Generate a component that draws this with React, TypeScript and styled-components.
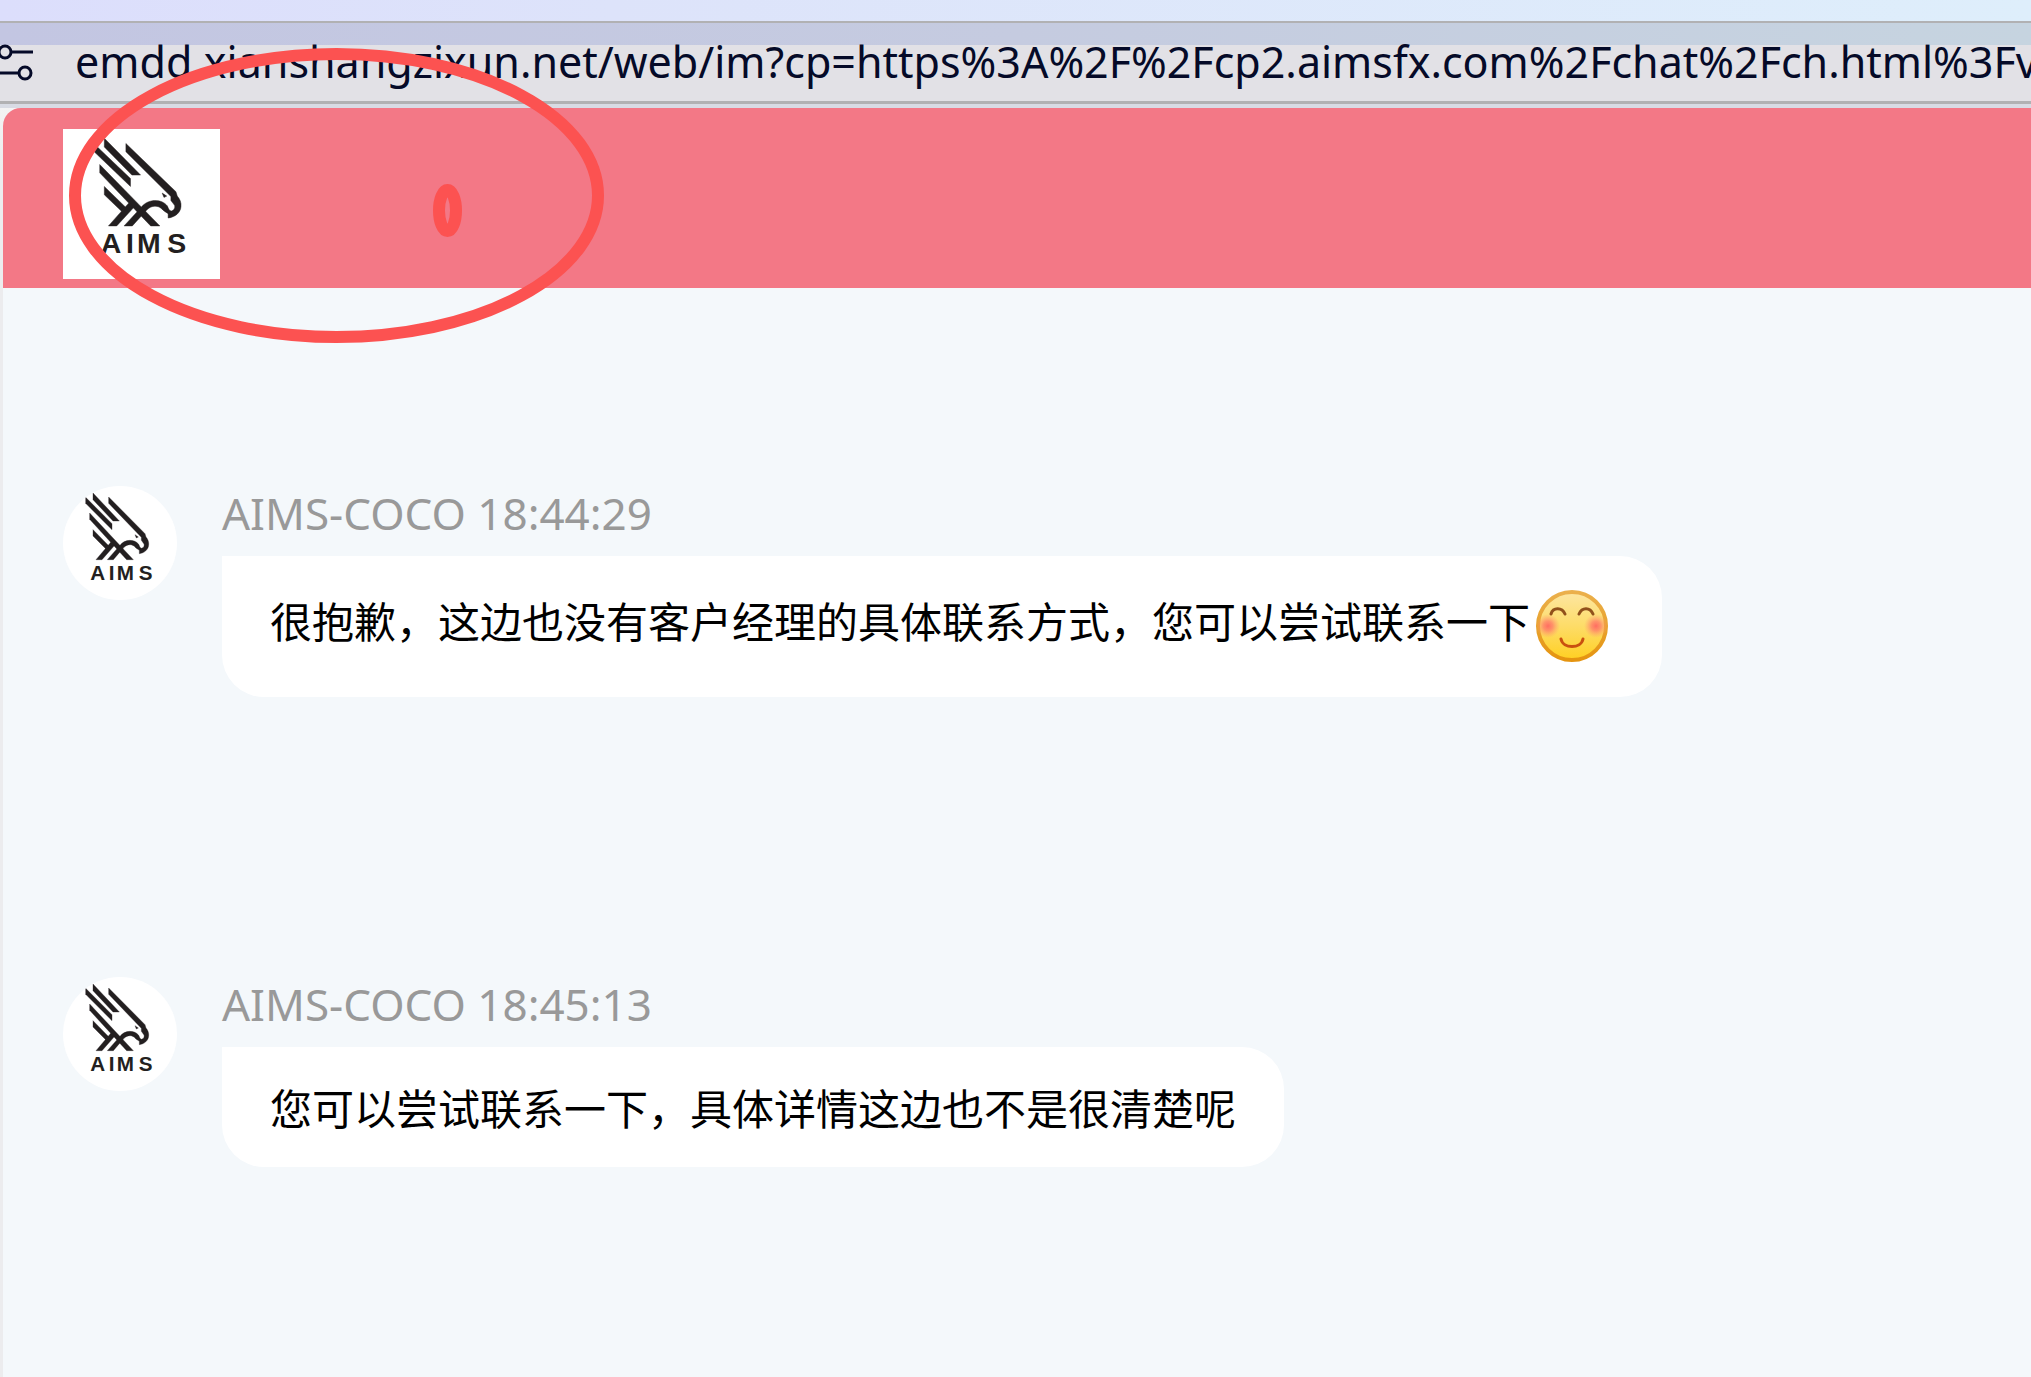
import React from "react";
import styled, { createGlobalStyle } from "styled-components";

const GlobalStyle = createGlobalStyle`
  *, *::before, *::after { box-sizing: border-box; }
  body {
    margin: 0;
    background: #ececee;
    font-family: "Noto Sans", "Noto Sans CJK SC", sans-serif;
  }
`;

const Page = styled.div`
  position: relative;
  display: flex;
  flex-direction: column;
  min-height: 100vh;
  overflow: hidden;
`;

const TabStrip = styled.div`
  height: 21px;
  background: linear-gradient(90deg, #dcdefc, #dde3fa 30%, #deeefb);
`;

const Toolbar = styled.div`
  display: flex;
  align-items: center;
  gap: 41px;
  height: 83px;
  border-top: 2px solid #b1b1b3;
  border-bottom: 3px solid #b1b1b3;
  background:
    linear-gradient(90deg, #c3c6e2, #c5cbe0 50%, #c6d4e0) top / 100% 22px no-repeat,
    #e2e1e6;
`;

const SiteButton = styled.button`
  display: flex;
  padding: 0;
  border: 0;
  background: none;
  color: #050a28;
`;

const AddressInput = styled.input`
  flex: 1;
  min-width: 0;
  height: 60px;
  padding: 0;
  border: 0;
  outline: 0;
  background: transparent;
  color: #050a28;
  font: 43px/60px "Noto Sans", sans-serif;
`;

const ChatWindow = styled.main`
  flex: 1;
  display: flex;
  flex-direction: column;
  padding-left: 3px;
  border-top: 4px solid #d8dbe4;
  background: linear-gradient(#f3f3f4, #ececee 60px);
`;

const ChatHeader = styled.header`
  display: flex;
  align-items: center;
  height: 180px;
  padding: 12px 60px 0;
  border-top-left-radius: 18px;
  background: #f37886;
`;

const HeaderLogo = styled.div`
  display: flex;
  width: 157px;
  height: 150px;
  background: #fff;
`;

const MessageList = styled.ol`
  flex: 1;
  display: flex;
  flex-direction: column;
  gap: 280px;
  margin: 0;
  padding: 198px 60px 60px;
  list-style: none;
  background: #f4f8fb;
`;

const MessageRow = styled.li`
  display: flex;
  align-items: flex-start;
  gap: 45px;
`;

const Avatar = styled.div`
  display: flex;
  flex: none;
  width: 114px;
  height: 114px;
  border-radius: 50%;
  overflow: hidden;
  background: #fff;
`;

const MessageBody = styled.div`
  display: flex;
  flex-direction: column;
  align-items: flex-start;
  gap: 16px;
`;

const Sender = styled.div`
  color: #999;
  font-size: 44px;
  line-height: 54px;
`;

const Bubble = styled.p`
  margin: 0;
  padding: 30px 48px;
  border-radius: 0 42px 42px 42px;
  background: #fff;
  color: #000;
  font: 42px/60px "Noto Sans CJK SC", sans-serif;
`;

const Emoji = styled.svg`
  width: 84px;
  height: 81px;
  vertical-align: middle;
`;

const Markup = styled.svg`
  position: absolute;
  top: 48px;
  left: 69px;
  width: 535px;
  height: 295px;
  pointer-events: none;
`;

const BrandSvg = styled.svg`
  width: 100%;
  height: 100%;
`;

function Brand() {
  return (
    <BrandSvg viewBox="0 0 342 342" preserveAspectRatio="none" role="img" aria-label="AIMS">
      <g fill="#231f20" stroke="#231f20" strokeWidth="1">
        <path d="M68 34 147 113V131L68 52Z" />
        <path d="M90 21 169 105H150L90 41Z" />
        <path d="M80 81 211 221H191L80 100Z" />
        <path d="M90 131 137 179 128 188 90 150Z" />
        <path d="M99 221 144 168 155 178 117 221Z" />
        <path d="M133 221 170 179C184 159 214 158 227 175C230 180 230 186 236 187C241 186 245 180 243 174L235 163V154L137 52V33L246 143L249 153C255 160 258 168 257 177C256 191 244 201 229 203V193C223 189 218 186 214 181C206 174 193 174 183 184L151 221Z" />
        <path d="M216 146 226 153 220 156Z" />
      </g>
      <text x="82 137 161 227" y="283" fontFamily="Liberation Sans, Arial, sans-serif" fontSize="62" fontWeight="700" fill="#231f20">
        AIMS
      </text>
    </BrandSvg>
  );
}

function BlushingFace() {
  return (
    <Emoji viewBox="0 0 84 81" role="img" aria-label="微笑">
      <defs>
        <linearGradient id="face" x1="0" y1="0" x2="0" y2="1">
          <stop offset="0" stopColor="#fde6a2" />
          <stop offset="0.5" stopColor="#fddc68" />
          <stop offset="1" stopColor="#ffd021" />
        </linearGradient>
        <linearGradient id="rim" x1="0" y1="0" x2="0" y2="1">
          <stop offset="0" stopColor="#ebb04c" />
          <stop offset="1" stopColor="#e59410" />
        </linearGradient>
        <radialGradient id="cheek">
          <stop offset="0" stopColor="#ff6d62" />
          <stop offset="0.4" stopColor="#ff8169" stopOpacity="0.8" />
          <stop offset="1" stopColor="#ffa070" stopOpacity="0" />
        </radialGradient>
      </defs>
      <circle cx="42" cy="40" r="34" fill="url(#face)" stroke="url(#rim)" strokeWidth="4" />
      <circle cx="18" cy="40" r="12" fill="url(#cheek)" />
      <circle cx="66" cy="40" r="12" fill="url(#cheek)" />
      <g fill="none" strokeLinecap="round" strokeWidth="3">
        <path d="M21 28C23 21 32 21 35 28" stroke="#91511b" />
        <path d="M49 28C52 21 60 21 63 28" stroke="#91511b" />
        <path d="M31 53C33 63 51 63 53 53" stroke="#c9500f" />
      </g>
    </Emoji>
  );
}

const messages = [
  {
    time: "18:44:29",
    text: "很抱歉，这边也没有客户经理的具体联系方式，您可以尝试联系一下",
    smile: true,
  },
  {
    time: "18:45:13",
    text: "您可以尝试联系一下，具体详情这边也不是很清楚呢",
    smile: false,
  },
];

export default function App() {
  return (
    <Page>
      <GlobalStyle />
      <TabStrip />
      <Toolbar>
        <SiteButton type="button" aria-label="Site information">
          <svg width="34" height="40" viewBox="0 0 34 40" fill="none" stroke="currentColor" strokeWidth="3">
            <circle cx="5" cy="10" r="6" />
            <path d="M11 10H33M0 31H19" />
            <circle cx="25" cy="31" r="6" />
          </svg>
        </SiteButton>
        <AddressInput
          aria-label="Address"
          type="text"
          readOnly
          value="emdd.xianshangzixun.net/web/im?cp=https%3A%2F%2Fcp2.aimsfx.com%2Fchat%2Fch.html%3Fv"
        />
      </Toolbar>
      <ChatWindow>
        <ChatHeader>
          <HeaderLogo>
            <Brand />
          </HeaderLogo>
        </ChatHeader>
        <MessageList>
          {messages.map((message) => (
            <MessageRow key={message.time}>
              <Avatar>
                <Brand />
              </Avatar>
              <MessageBody>
                <Sender>AIMS-COCO {message.time}</Sender>
                <Bubble>
                  {message.text}
                  {message.smile && <BlushingFace />}
                </Bubble>
              </MessageBody>
            </MessageRow>
          ))}
        </MessageList>
      </ChatWindow>
      <Markup viewBox="0 0 535 295" fill="none" stroke="#fc5251" strokeWidth="12" aria-hidden="true">
        <ellipse cx="267.5" cy="147.5" rx="261.5" ry="141.5" />
        <ellipse cx="378.5" cy="162.5" rx="8.5" ry="20.5" />
      </Markup>
    </Page>
  );
}
